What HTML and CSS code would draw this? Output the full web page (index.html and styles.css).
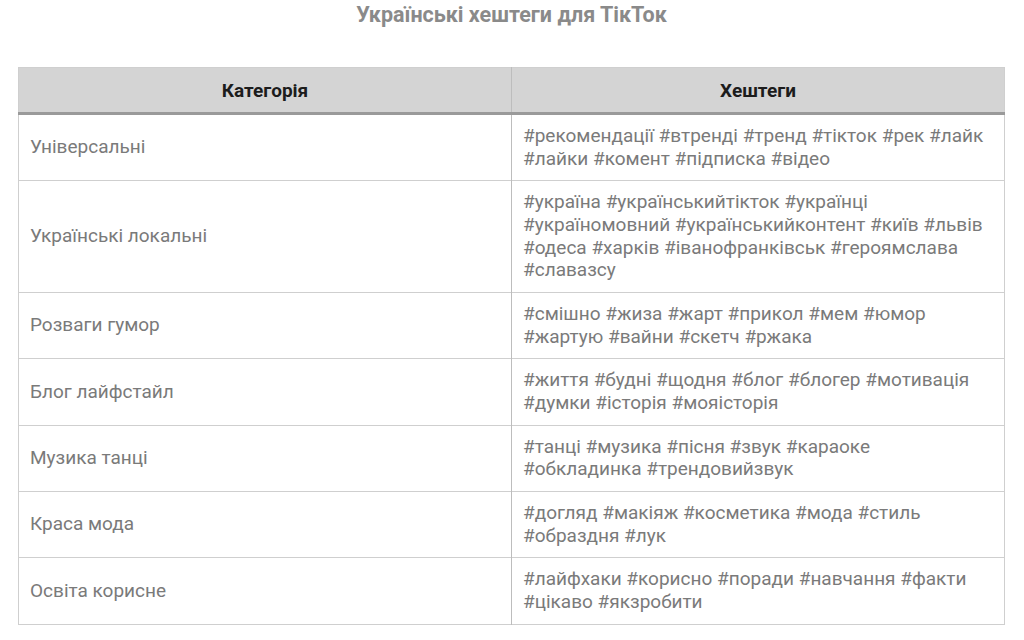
FILE: index.html
```html
<!DOCTYPE html>
<html lang="uk">
<head>
<meta charset="utf-8">
<link rel="stylesheet" href="styles.css">
</head>
<body>
<div class="page">
  <h2 class="title">Українські хештеги для ТікТок</h2>
  <table class="tags">
    <thead>
      <tr><th>Категорія</th><th>Хештеги</th></tr>
    </thead>
    <tbody>
      <tr><td>Універсальні</td><td>#рекомендації #втренді #тренд #тікток #рек #лайк #лайки #комент #підписка #відео</td></tr>
      <tr><td>Українські локальні</td><td>#україна #українськийтікток #українці #україномовний #українськийконтент #київ #львів #одеса #харків #іванофранківськ #героямслава #славазсу</td></tr>
      <tr><td>Розваги гумор</td><td>#смішно #жиза #жарт #прикол #мем #юмор #жартую #вайни #скетч #ржака</td></tr>
      <tr><td>Блог лайфстайл</td><td>#життя #будні #щодня #блог #блогер #мотивація #думки #історія #мояісторія</td></tr>
      <tr><td>Музика танці</td><td>#танці #музика #пісня #звук #караоке #обкладинка #трендовийзвук</td></tr>
      <tr><td>Краса мода</td><td>#догляд #макіяж #косметика #мода #стиль #образдня #лук</td></tr>
      <tr><td>Освіта корисне</td><td>#лайфхаки #корисно #поради #навчання #факти #цікаво #якзробити</td></tr>
    </tbody>
  </table>
</div>
</body>
</html>
```

FILE: styles.css
```css
html, body {
  margin: 0;
  padding: 0;
  background: #fff;
}
.page {
  padding: 0 19px 0 18px;
  font-family: Roboto, "Noto Sans", sans-serif;
}
.title {
  margin: 0;
  padding-top: 3px;
  height: 67px;
  box-sizing: border-box;
  text-align: center;
  font-size: 21.5px;
  line-height: 24px;
  font-weight: 700;
  color: #8a8a8a;
}
.tags {
  width: 100%;
  border-collapse: collapse;
  border: 1px solid #cfcfcf;
  table-layout: fixed;
}
.tags th {
  background: #d4d4d4;
  color: #1c1c1c;
  font-size: 19px;
  font-weight: 700;
  height: 44px;
  padding: 0 11px;
  border-left: 1px solid #bdbdbd;
  border-bottom: 3px solid #9a9a9a;
  text-align: center;
  vertical-align: middle;
}
.tags td {
  color: #7a7a7a;
  font-size: 19px;
  line-height: 22.67px;
  padding: 10px 11px;
  border-top: 1px solid #cfcfcf;
  border-left: 1px solid #bdbdbd;
  vertical-align: middle;
}
.tags tr > :first-child {
  border-left: none;
}
```
